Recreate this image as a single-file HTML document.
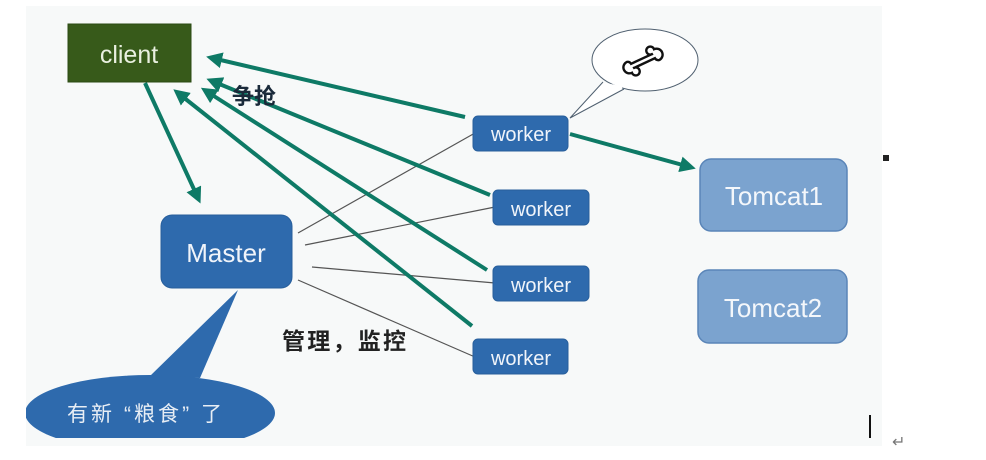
<!DOCTYPE html>
<html><head><meta charset="utf-8"><style>
html,body{margin:0;padding:0;background:#fff;}
body{width:986px;height:460px;position:relative;overflow:hidden;font-family:"Liberation Sans","Noto Sans CJK SC",sans-serif;}
.bg{position:absolute;left:26px;top:6px;width:856px;height:440px;background:#f7f9f9;}
svg{position:absolute;left:0;top:0;}
</style></head><body>
<div class="bg"></div>
<svg width="986" height="460" viewBox="0 0 986 460">
<defs>
<marker id="ah" markerWidth="4" markerHeight="4" refX="2.5" refY="2" orient="auto" markerUnits="strokeWidth"><path d="M0,0 L4,2 L0,4 Z" fill="#0e7a66"/></marker>
<clipPath id="cp"><rect x="26" y="6" width="856" height="432"/></clipPath>
</defs>
<g stroke="#555" stroke-width="1.2">
<line x1="298" y1="233" x2="475" y2="133"/>
<line x1="305" y1="245" x2="495" y2="207"/>
<line x1="312" y1="267" x2="495" y2="283"/>
<line x1="298" y1="280" x2="475" y2="357"/>
</g>
<g clip-path="url(#cp)">
<path d="M238,290 L150,376 L200,378 Z" fill="#2e6aad"/>
<ellipse cx="150" cy="413" rx="125" ry="38" fill="#2e6aad"/>
</g>
<text x="67" y="421" font-size="21" fill="#e8eef5" font-family="Liberation Sans,Noto Sans CJK SC,sans-serif" textLength="155">有新 “粮食” 了</text>
<rect x="68" y="24" width="123" height="58" fill="#375a1a" stroke="#2b4a14"/>
<text x="129" y="63" font-size="25" fill="#e9f0e0" text-anchor="middle">client</text>
<rect x="161" y="215" width="131" height="73" rx="11" fill="#2e6aad" stroke="#285f9c"/>
<text x="226" y="262" font-size="26" fill="#f0f4fa" text-anchor="middle">Master</text>
<g fill="#2e6aad" stroke="#285f9c">
<rect x="473" y="116" width="95" height="35" rx="5"/>
<rect x="493" y="190" width="96" height="35" rx="5"/>
<rect x="493" y="266" width="96" height="35" rx="5"/>
<rect x="473" y="339" width="95" height="35" rx="5"/>
</g>
<g font-size="20" fill="#f0f4fa" text-anchor="middle">
<text x="521" y="141">worker</text>
<text x="541" y="216">worker</text>
<text x="541" y="292">worker</text>
<text x="521" y="365">worker</text>
</g>
<rect x="700" y="159" width="147" height="72" rx="11" fill="#7ba3cf" stroke="#5a85b8" stroke-width="1.5"/>
<rect x="698" y="270" width="149" height="73" rx="11" fill="#7ba3cf" stroke="#5a85b8" stroke-width="1.5"/>
<g font-size="26" fill="#f4f7fb" text-anchor="middle">
<text x="774" y="205">Tomcat1</text>
<text x="773" y="317">Tomcat2</text>
</g>
<g stroke="#0e7a66" stroke-width="4" fill="none" marker-end="url(#ah)">
<line x1="465" y1="117" x2="212" y2="58"/>
<line x1="490" y1="195" x2="212" y2="81"/>
<line x1="487" y1="270" x2="206" y2="91"/>
<line x1="472" y1="326" x2="178" y2="93"/>
<line x1="145" y1="83" x2="198" y2="198"/>
<line x1="570" y1="134" x2="690" y2="167"/>
</g>
<path d="M603,82 L570,118 L624,89" fill="#fff" stroke="#506070" stroke-width="1"/>
<ellipse cx="645" cy="60" rx="53" ry="31" fill="#fff" stroke="#506070" stroke-width="1"/>
<path d="M604,84 L622,88" stroke="#fff" stroke-width="3"/>
<g transform="translate(643,61) rotate(-25)">
<path d="M-12,-2.5 L12,-2.5 A4,4 0 1 1 15,-6 A4,4 0 1 1 15,6 A4,4 0 0 1 12,2.5 L-12,2.5 A4,4 0 1 1 -15,6 A4,4 0 1 1 -15,-6 A4,4 0 0 1 -12,-2.5 Z" fill="#fff" stroke="#111" stroke-width="2.4"/>
</g>
<text x="232" y="104" font-size="22" fill="#1a2a3a" font-weight="bold">争抢</text>
<text x="282" y="349" font-size="23" fill="#222" font-weight="bold" textLength="124">管理，监控</text>
<rect x="883" y="155" width="6" height="6" fill="#222"/>
<line x1="870" y1="415" x2="870" y2="438" stroke="#111" stroke-width="2"/>
<text x="892" y="447" font-size="16" fill="#777">↵</text>
</svg>
</body></html>
